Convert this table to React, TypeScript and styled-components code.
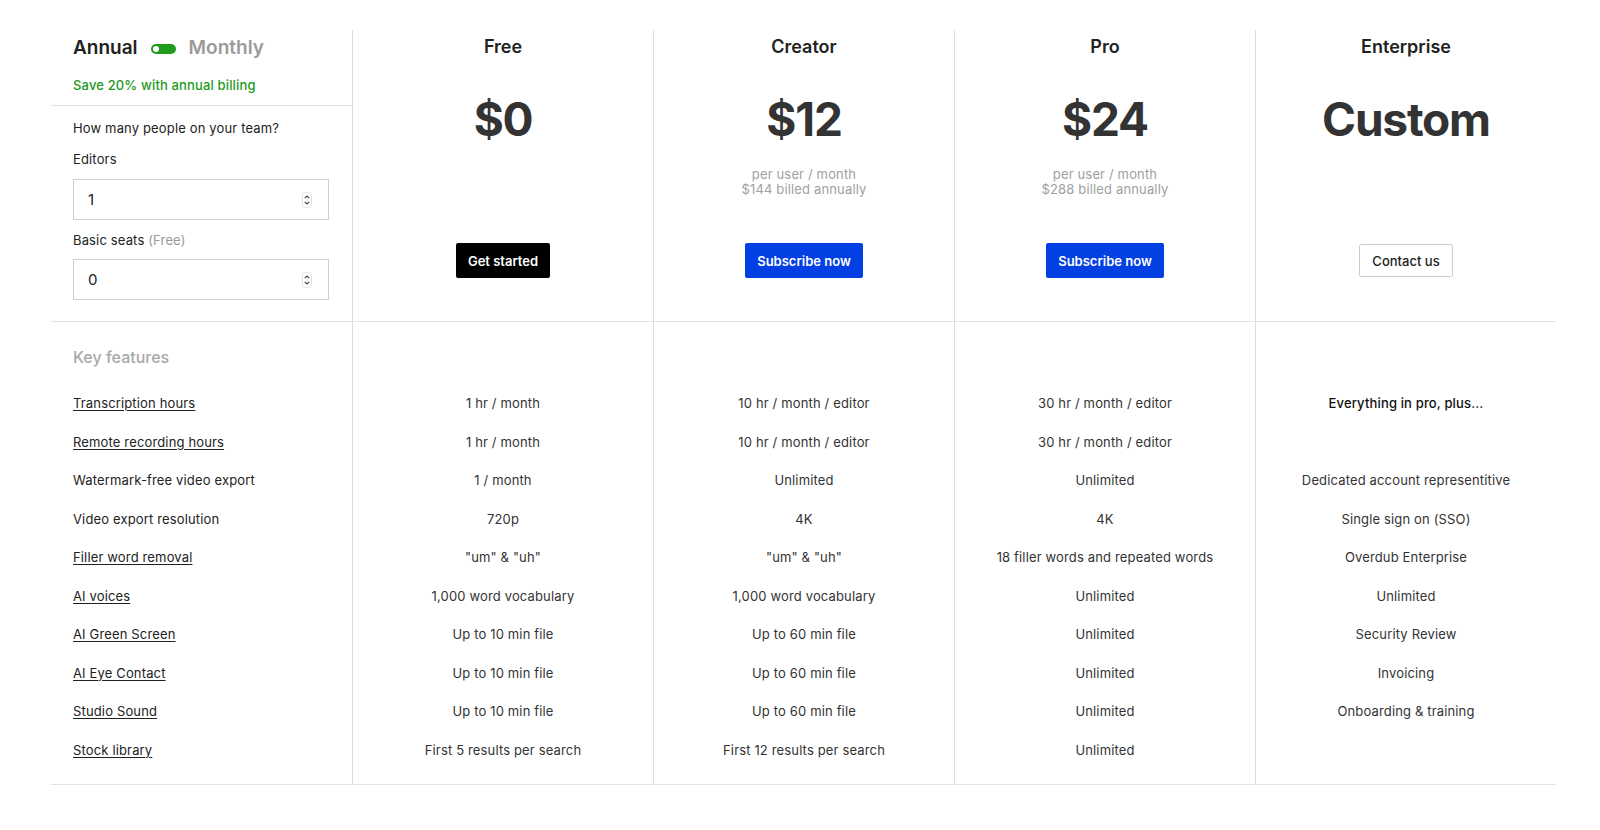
import React from "react";
import styled, { createGlobalStyle, css } from "styled-components";

const GlobalStyle = createGlobalStyle`
  html, body {
    margin: 0;
    padding: 0;
    background: #ffffff;
  }
  body {
    font-family: Inter, "Noto Sans", "Liberation Sans", sans-serif;
    color: #222;
    -webkit-font-smoothing: antialiased;
  }
  * { box-sizing: border-box; }
`;

const COL = 301;
const ROW_H = 38.56;
const DIVIDER = "#dcdcdc";
const SMALL = css`
  font-size: 13px;
  line-height: 16px;
  letter-spacing: 0.15px;
`;

const Page = styled.div`
  padding: 30px 0 0 51px;
`;

const Table = styled.div`
  width: ${COL * 5}px;
`;

const HeaderGrid = styled.div`
  display: grid;
  grid-template-columns: repeat(5, ${COL}px);
  height: 291px;
`;

const LabelHead = styled.div`
  display: flex;
  flex-direction: column;
`;

const BillingBlock = styled.div`
  padding: 6px 22px 12px 22px;
  border-bottom: 1px solid #e2e2e2;
`;

const ToggleRow = styled.div`
  display: flex;
  align-items: center;
  gap: 13px;
  height: 24px;
`;

const BillingOption = styled.span<{ $active?: boolean }>`
  font-size: 19px;
  line-height: 24px;
  font-weight: 600;
  color: ${(p) => (p.$active ? "#222" : "#9a9a9a")};
`;

const Toggle = styled.span`
  position: relative;
  display: inline-block;
  width: 25px;
  height: 10px;
  border-radius: 5px;
  background: #1f9a1f;
  margin-top: 1px;
`;

const Knob = styled.span`
  position: absolute;
  left: 2px;
  top: 2px;
  width: 6px;
  height: 6px;
  border-radius: 50%;
  background: #ffffff;
`;

const SaveNote = styled.div`
  margin-top: 17px;
  ${SMALL}
  font-weight: 500;
  color: #1e9a1e;
`;

const TeamBlock = styled.div`
  padding: 14px 23px 0 22px;
  display: flex;
  flex-direction: column;
`;

const Question = styled.div`
  ${SMALL}
  color: #222;
`;

const FieldLabel = styled.div<{ $gap: number }>`
  margin-top: ${(p) => p.$gap}px;
  ${SMALL}
  color: #222;
`;

const Muted = styled.span`
  color: #999;
`;

const NumberBox = styled.div<{ $gap: number }>`
  margin-top: ${(p) => p.$gap}px;
  height: 41px;
  border: 1px solid #cfcfcf;
  display: flex;
  align-items: center;
  padding: 0 16px 0 14px;
`;

const NumberValue = styled.input`
  flex: 1;
  min-width: 0;
  border: none;
  outline: none;
  background: transparent;
  font-family: inherit;
  font-size: 15px;
  color: #222;
  padding: 0;
`;

const SpinnerBox = styled.span`
  display: inline-flex;
  flex-direction: column;
  align-items: center;
  justify-content: space-between;
  width: 10px;
  height: 16px;
  padding: 2px 0;
  border: 1px solid #e4e4e4;
  border-radius: 4px;
`;

const Spinner = () => (
  <SpinnerBox>
    <svg width="6" height="4" viewBox="0 0 6 4">
      <path d="M0.8 3.2 L3 1 L5.2 3.2" fill="none" stroke="#444" strokeWidth="1.1" />
    </svg>
    <svg width="6" height="4" viewBox="0 0 6 4">
      <path d="M0.8 0.8 L3 3 L5.2 0.8" fill="none" stroke="#444" strokeWidth="1.1" />
    </svg>
  </SpinnerBox>
);

const PlanHead = styled.div`
  border-left: 1px solid ${DIVIDER};
  display: flex;
  flex-direction: column;
  align-items: center;
  padding-top: 6px;
`;

const PlanName = styled.div`
  font-size: 18px;
  line-height: 22px;
  font-weight: 600;
  color: #222;
`;

const Price = styled.div`
  margin-top: 33px;
  font-size: 46px;
  line-height: 56px;
  font-weight: 700;
  color: #333;
  letter-spacing: -1.2px;
`;

const PriceNote = styled.div`
  margin-top: 20px;
  height: 30px;
  font-size: 13px;
  line-height: 15px;
  letter-spacing: 0.15px;
  color: #a0a0a0;
  text-align: center;
`;

const ButtonSlot = styled.div`
  margin-top: 46px;
  height: 35px;
  display: flex;
  align-items: center;
`;

const buttonVariants = {
  dark: css`
    background: #000;
    color: #fff;
    border: none;
    height: 35px;
    font-weight: 600;
  `,
  blue: css`
    background: #0340e4;
    color: #fff;
    border: none;
    height: 35px;
    font-weight: 600;
  `,
  outline: css`
    background: #fff;
    color: #222;
    border: 1px solid #cdcdcd;
    height: 33px;
    font-weight: 500;
  `,
};

type Variant = keyof typeof buttonVariants;

const PlanButton = styled.button<{ $variant: Variant }>`
  font-family: inherit;
  font-size: 13px;
  padding: 0 12px;
  border-radius: 2px;
  cursor: pointer;
  ${(p) => buttonVariants[p.$variant]}
`;

const FeatureGrid = styled.div`
  display: grid;
  grid-template-columns: repeat(5, ${COL}px);
  border-top: 1px solid #e2e2e2;
  border-bottom: 1px solid #e2e2e2;
`;

const FeatureCol = styled.div<{ $divided?: boolean }>`
  display: flex;
  flex-direction: column;
  padding-bottom: 14.5px;
  ${(p) => p.$divided && `border-left: 1px solid ${DIVIDER};`}
`;

const FeatureHead = styled.div`
  height: 61.7px;
  padding: 25px 0 0 22px;
  font-size: 16px;
  line-height: 20px;
  font-weight: 500;
  color: #a8a8a8;
`;

const FeatureCell = styled.div<{ $center?: boolean }>`
  height: ${ROW_H}px;
  display: flex;
  align-items: center;
  justify-content: ${(p) => (p.$center ? "center" : "flex-start")};
  padding-left: ${(p) => (p.$center ? 0 : 22)}px;
`;

const FeatureName = styled.span<{ $link?: boolean }>`
  ${SMALL}
  color: #222;
  ${(p) =>
    p.$link &&
    css`
      text-decoration: underline;
      text-decoration-thickness: 1px;
      text-underline-offset: 2px;
    `}
`;

const FeatureValue = styled.span<{ $strong?: boolean }>`
  ${SMALL}
  color: ${(p) => (p.$strong ? "#111" : "#333")};
  font-weight: ${(p) => (p.$strong ? 500 : 400)};
  text-align: center;
`;

const features: { name: string; link: boolean }[] = [
  { name: "Transcription hours", link: true },
  { name: "Remote recording hours", link: true },
  { name: "Watermark-free video export", link: false },
  { name: "Video export resolution", link: false },
  { name: "Filler word removal", link: true },
  { name: "AI voices", link: true },
  { name: "AI Green Screen", link: true },
  { name: "AI Eye Contact", link: true },
  { name: "Studio Sound", link: true },
  { name: "Stock library", link: true },
];

type Plan = {
  name: string;
  price: string;
  note?: string[];
  cta: string;
  variant: Variant;
  values: string[];
  strongFirst?: boolean;
};

const plans: Plan[] = [
  {
    name: "Free",
    price: "$0",
    cta: "Get started",
    variant: "dark",
    values: [
      "1 hr / month",
      "1 hr / month",
      "1 / month",
      "720p",
      '"um" & "uh"',
      "1,000 word vocabulary",
      "Up to 10 min file",
      "Up to 10 min file",
      "Up to 10 min file",
      "First 5 results per search",
    ],
  },
  {
    name: "Creator",
    price: "$12",
    note: ["per user / month", "$144 billed annually"],
    cta: "Subscribe now",
    variant: "blue",
    values: [
      "10 hr / month / editor",
      "10 hr / month / editor",
      "Unlimited",
      "4K",
      '"um" & "uh"',
      "1,000 word vocabulary",
      "Up to 60 min file",
      "Up to 60 min file",
      "Up to 60 min file",
      "First 12 results per search",
    ],
  },
  {
    name: "Pro",
    price: "$24",
    note: ["per user / month", "$288 billed annually"],
    cta: "Subscribe now",
    variant: "blue",
    values: [
      "30 hr / month / editor",
      "30 hr / month / editor",
      "Unlimited",
      "4K",
      "18 filler words and repeated words",
      "Unlimited",
      "Unlimited",
      "Unlimited",
      "Unlimited",
      "Unlimited",
    ],
  },
  {
    name: "Enterprise",
    price: "Custom",
    cta: "Contact us",
    variant: "outline",
    strongFirst: true,
    values: [
      "Everything in pro, plus...",
      "",
      "Dedicated account representitive",
      "Single sign on (SSO)",
      "Overdub Enterprise",
      "Unlimited",
      "Security Review",
      "Invoicing",
      "Onboarding & training",
      "",
    ],
  },
];

export default function App() {
  return (
    <>
      <GlobalStyle />
      <Page>
        <Table>
          <HeaderGrid>
            <LabelHead>
              <BillingBlock>
                <ToggleRow>
                  <BillingOption $active>Annual</BillingOption>
                  <Toggle>
                    <Knob />
                  </Toggle>
                  <BillingOption>Monthly</BillingOption>
                </ToggleRow>
                <SaveNote>Save 20% with annual billing</SaveNote>
              </BillingBlock>
              <TeamBlock>
                <Question>How many people on your team?</Question>
                <FieldLabel $gap={15}>Editors</FieldLabel>
                <NumberBox $gap={12}>
                  <NumberValue type="text" value="1" readOnly />
                  <Spinner />
                </NumberBox>
                <FieldLabel $gap={12}>
                  Basic seats <Muted>(Free)</Muted>
                </FieldLabel>
                <NumberBox $gap={11}>
                  <NumberValue type="text" value="0" readOnly />
                  <Spinner />
                </NumberBox>
              </TeamBlock>
            </LabelHead>
            {plans.map((p) => (
              <PlanHead key={p.name}>
                <PlanName>{p.name}</PlanName>
                <Price>{p.price}</Price>
                <PriceNote>
                  {p.note?.map((line) => (
                    <div key={line}>{line}</div>
                  ))}
                </PriceNote>
                <ButtonSlot>
                  <PlanButton $variant={p.variant}>{p.cta}</PlanButton>
                </ButtonSlot>
              </PlanHead>
            ))}
          </HeaderGrid>
          <FeatureGrid>
            <FeatureCol>
              <FeatureHead>Key features</FeatureHead>
              {features.map((f) => (
                <FeatureCell key={f.name}>
                  <FeatureName $link={f.link}>{f.name}</FeatureName>
                </FeatureCell>
              ))}
            </FeatureCol>
            {plans.map((p) => (
              <FeatureCol key={p.name} $divided>
                <FeatureHead />
                {p.values.map((v, i) => (
                  <FeatureCell key={i} $center>
                    <FeatureValue $strong={p.strongFirst && i === 0}>{v}</FeatureValue>
                  </FeatureCell>
                ))}
              </FeatureCol>
            ))}
          </FeatureGrid>
        </Table>
      </Page>
    </>
  );
}
